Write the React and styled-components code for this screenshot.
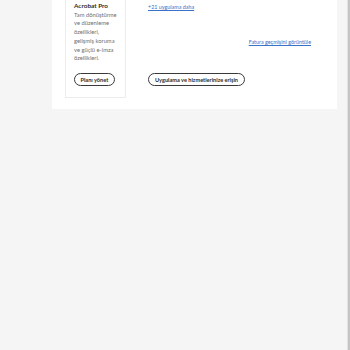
import React from "react";
import styled, { createGlobalStyle } from "styled-components";

const Global = createGlobalStyle`
  html, body { margin: 0; padding: 0; }
  body { background: #f5f5f5; font-family: "Lato", "Open Sans", sans-serif; }
`;

const Page = styled.div`
  min-height: 100vh;
  box-sizing: border-box;
  background: #f5f5f5;
  padding: 0 11px 0 52px;
  border-right: 2px solid #c4c4c4;
  box-shadow: inset -1px 0 0 #e2e2e2;
`;

const Card = styled.section`
  width: 285px;
  background: #ffffff;
  padding-bottom: 11px;
  display: flex;
  align-items: flex-start;
`;

const PlanCard = styled.div`
  margin-left: 13px;
  width: 61px;
  box-sizing: border-box;
  border: 1px solid #ececec;
  border-top: none;
  padding: 1px 4px 11px 8px;
  display: flex;
  flex-direction: column;
  align-items: flex-start;
  white-space: nowrap;
`;

const PlanTitle = styled.div`
  font-size: 6.4px;
  line-height: 9px;
  height: 9px;
  font-weight: 700;
  color: #2c2c2c;
`;

const PlanDesc = styled.div`
  margin-top: 0.5px;
  font-size: 5.8px;
  line-height: 8.8px;
  color: #707070;
`;

const DescLine = styled.div`
  height: 8.8px;
`;

const PillButton = styled.button`
  margin-top: ${(p) => p.$top}px;
  height: 13px;
  box-sizing: border-box;
  padding: 0 ${(p) => p.$pad}px;
  border: 1.3px solid #3a3a3a;
  border-radius: 7px;
  background: #fff;
  font-family: "Lato", "Open Sans", sans-serif;
  font-size: 5.6px;
  font-weight: 700;
  color: #2c2c2c;
  white-space: nowrap;
  cursor: pointer;
`;

const Main = styled.div`
  flex: 1;
  margin-left: 22px;
  padding-right: 26px;
  display: flex;
  flex-direction: column;
  align-items: flex-start;
`;

const Link = styled.a`
  margin-top: ${(p) => p.$top}px;
  align-self: ${(p) => (p.$right ? "flex-end" : "flex-start")};
  font-size: 5.4px;
  line-height: 9px;
  color: #3a72c9;
  text-decoration: underline;
  white-space: nowrap;
  cursor: pointer;
`;

const lines = [
  "Tam dönüştürme",
  "ve düzenleme",
  "özellikleri,",
  "gelişmiş koruma",
  "ve güçlü e-imza",
  "özellikleri.",
];

export default function App() {
  return (
    <>
      <Global />
      <Page>
        <Card>
          <PlanCard>
            <PlanTitle>Acrobat Pro</PlanTitle>
            <PlanDesc>
              {lines.map((l) => (
                <DescLine key={l}>{l}</DescLine>
              ))}
            </PlanDesc>
            <PillButton $top={9.5} $pad={5.5}>Planı yönet</PillButton>
          </PlanCard>
          <Main>
            <Link $top={2.5}>+21 uygulama daha</Link>
            <Link $top={26} $right>Fatura geçmişini görüntüle</Link>
            <PillButton $top={26.5} $pad={6}>Uygulama ve hizmetlerinize erişin</PillButton>
          </Main>
        </Card>
      </Page>
    </>
  );
}
